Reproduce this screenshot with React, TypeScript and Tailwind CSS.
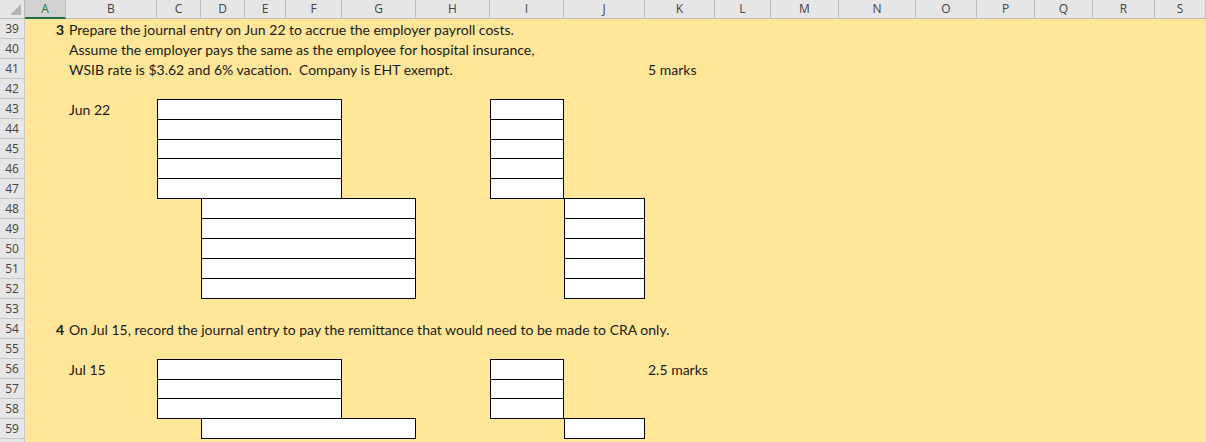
import React from "react";

const cols = ["A", "B", "C", "D", "E", "F", "G", "H", "I", "J", "K", "L", "M", "N", "O", "P", "Q", "R", "S"];
const rows = Array.from({ length: 22 }, (_, i) => 39 + i);

function Box({ lines, className }: { lines: number; className: string }) {
	return (
		<div className={`flex flex-col divide-y divide-black border border-black bg-white ${className}`}>
			{Array.from({ length: lines }, (_, i) => (
				<div key={i} className="flex-1" />
			))}
		</div>
	);
}

export default function App() {
	return (
		<div className="h-[442px] w-[1206px] overflow-hidden bg-white font-['Lato',sans-serif] text-[14px] text-[#1a1a1a]">
			<div className="grid grid-cols-[25px_41px_91px_44px_44px_41px_56px_74px_74px_74px_81px_70px_56px_68px_77px_61px_58px_58px_62px_51px] grid-rows-[19px_repeat(22,20px)]">
				{/* corner */}
				<div className="relative col-start-1 row-start-1 border-r border-b border-[#bcbcbc] bg-[#e6e6e6]">
					<svg className="absolute right-[3px] bottom-[3px]" width="11" height="11" viewBox="0 0 11 11">
						<path d="M11 0 L11 11 L0 11 Z" fill="#b4b4b4" />
					</svg>
				</div>

				{/* column headers */}
				{cols.map((c, i) =>
					c === "A" ? (
						<div
							key={c}
							className="row-start-1 flex items-center justify-center border-r border-b-2 border-r-[#bcbcbc] border-b-[#217346] bg-[#d2d2d2] font-['Open_Sans',sans-serif] text-[12px] text-[#217346]"
							style={{ gridColumnStart: i + 2 }}
						>
							{c}
						</div>
					) : (
						<div
							key={c}
							className="row-start-1 flex items-center justify-center border-r border-b border-[#bcbcbc] bg-[#e6e6e6] font-['Open_Sans',sans-serif] text-[12px] text-[#444]"
							style={{ gridColumnStart: i + 2 }}
						>
							{c}
						</div>
					)
				)}

				{/* row headers; the last one is only a sliver at the bottom edge */}
				{rows.map((r, i) => (
					<div
						key={r}
						className="col-start-1 flex items-center justify-center border-r border-b border-[#c8c8c8] bg-[#e6e6e6] font-['Open_Sans',sans-serif] text-[12px] text-[#444]"
						style={{ gridRowStart: i + 2 }}
					>
						{r < 60 ? r : ""}
					</div>
				))}

				{/* fill */}
				<div className="col-start-2 -col-end-1 row-start-2 -row-end-1 bg-[#ffe699]" />

				{/* question 3 */}
				<div className="col-start-2 row-start-2 flex items-center justify-end pr-[2px] font-bold">3</div>
				<div className="col-start-3 row-start-2 flex items-center whitespace-nowrap pl-[3px]">
					Prepare the journal entry on Jun 22 to accrue the employer payroll costs.
				</div>
				<div className="col-start-3 row-start-3 flex items-center whitespace-nowrap pl-[3px]">
					Assume the employer pays the same as the employee for hospital insurance,
				</div>
				<div className="col-start-3 row-start-4 flex items-center whitespace-nowrap pl-[3px]">
					WSIB rate is $3.62 and 6% vacation.&nbsp; Company is EHT exempt.
				</div>
				<div className="col-start-12 row-start-4 flex items-center whitespace-nowrap pl-[3px]">5 marks</div>
				<div className="col-start-3 row-start-6 flex items-center whitespace-nowrap pl-[3px]">Jun 22</div>

				<Box lines={5} className="col-start-4 col-end-8 row-start-6 row-end-11" />
				<Box lines={5} className="col-start-10 col-end-11 row-start-6 row-end-11" />
				<Box lines={5} className="col-start-5 col-end-9 row-start-11 row-end-16 -mt-px" />
				<Box lines={5} className="col-start-11 col-end-12 row-start-11 row-end-16 -mt-px" />

				{/* question 4 */}
				<div className="col-start-2 row-start-17 flex items-center justify-end pr-[2px] font-bold">4</div>
				<div className="col-start-3 row-start-17 flex items-center whitespace-nowrap pl-[3px]">
					On Jul 15, record the journal entry to pay the remittance that would need to be made to CRA only.
				</div>
				<div className="col-start-3 row-start-19 flex items-center whitespace-nowrap pl-[3px]">Jul 15</div>
				<div className="col-start-12 row-start-19 flex items-center whitespace-nowrap pl-[3px]">2.5 marks</div>

				<Box lines={3} className="col-start-4 col-end-8 row-start-19 row-end-22" />
				<Box lines={3} className="col-start-10 col-end-11 row-start-19 row-end-22" />
				<Box lines={1} className="col-start-5 col-end-9 row-start-22 row-end-23 -mt-px" />
				<Box lines={1} className="col-start-11 col-end-12 row-start-22 row-end-23 -mt-px" />
			</div>
		</div>
	);
}
